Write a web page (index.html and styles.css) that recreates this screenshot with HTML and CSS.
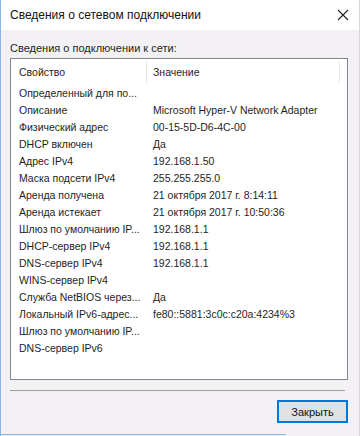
FILE: index.html
```html
<!DOCTYPE html>
<html lang="ru">
<head>
  <meta charset="UTF-8" />
  <title>Сведения о сетевом подключении</title>
  <link rel="stylesheet" href="styles.css">
</head>
<body>
  <div class="window">
    <div class="titlebar">
      <span class="title">Сведения о сетевом подключении</span>
      <svg class="close" width="12" height="12" viewBox="0 0 12 12">
        <path d="M1 1 L11 11 M11 1 L1 11" stroke="#222" stroke-width="1.1" fill="none" />
      </svg>
    </div>

    <div class="content">
      <div class="caption">Сведения о подключении к сети:</div>

      <div class="listbox">
        <div class="list-head">
          <div class="col-name">Свойство</div>
          <div class="col-value">Значение</div>
          <div class="col-rest"></div>
        </div>
        <div class="rows">
          <div class="row"><span>Определенный для по...</span><span></span></div>
          <div class="row"><span>Описание</span><span>Microsoft Hyper-V Network Adapter</span></div>
          <div class="row"><span>Физический адрес</span><span>00-15-5D-D6-4C-00</span></div>
          <div class="row"><span>DHCP включен</span><span>Да</span></div>
          <div class="row"><span>Адрес IPv4</span><span>192.168.1.50</span></div>
          <div class="row"><span>Маска подсети IPv4</span><span>255.255.255.0</span></div>
          <div class="row"><span>Аренда получена</span><span>21 октября 2017 г. 8:14:11</span></div>
          <div class="row"><span>Аренда истекает</span><span>21 октября 2017 г. 10:50:36</span></div>
          <div class="row"><span>Шлюз по умолчанию IP...</span><span>192.168.1.1</span></div>
          <div class="row"><span>DHCP-сервер IPv4</span><span>192.168.1.1</span></div>
          <div class="row"><span>DNS-сервер IPv4</span><span>192.168.1.1</span></div>
          <div class="row"><span>WINS-сервер IPv4</span><span></span></div>
          <div class="row"><span>Служба NetBIOS через...</span><span>Да</span></div>
          <div class="row"><span>Локальный IPv6-адрес...</span><span>fe80::5881:3c0c:c20a:4234%3</span></div>
          <div class="row"><span>Шлюз по умолчанию IP...</span><span></span></div>
          <div class="row"><span>DNS-сервер IPv6</span><span></span></div>
        </div>
      </div>

      <div class="divider"></div>

      <div class="buttons">
        <button class="btn-close">Закрыть</button>
      </div>
    </div>
    <div class="bottom-line"></div>
  </div>
</body>
</html>
```

FILE: styles.css
```css
body {
  margin: 0;
  font-family: 'Liberation Sans', Arial, sans-serif;
  color: #1e1e1e;
  background-color: #f4f1f4;
}
.window {
  width: 360px;
  height: 436px;
  box-sizing: border-box;
  border-left: 1px solid #8ab8e6;
  border-right: 1px solid #d8d5d8;
  display: flex;
  flex-direction: column;
  background-color: #f4f1f4;
}
.titlebar {
  height: 30px;
  flex-shrink: 0;
  background-color: #fff;
  display: flex;
  align-items: center;
  justify-content: space-between;
  padding: 0 8px 0 9px;
}
.title {
  font-size: 12px;
  color: #111;
}
.close {
  margin-right: 2px;
}
.content {
  flex: 1;
  display: flex;
  flex-direction: column;
  padding: 12px 11px 0 9px;
}
.caption {
  font-size: 11px;
  line-height: 13px;
}
.listbox {
  margin-top: 3px;
  height: 322px;
  box-sizing: border-box;
  border: 1px solid #828790;
  background-color: #fff;
  font-size: 10.5px;
}
.list-head {
  display: flex;
  height: 25px;
  align-items: center;
  padding-top: 1px;
  box-sizing: border-box;
}
.col-name {
  width: 127px;
  padding-left: 8px;
  border-right: 1px solid #e5e5e5;
  line-height: 22px;
}
.col-value {
  width: 186px;
  padding-left: 6px;
  border-right: 1px solid #e5e5e5;
  line-height: 22px;
}
.rows {
  display: flex;
  flex-direction: column;
}
.row {
  display: flex;
  height: 17px;
  align-items: center;
}
.row span:first-child {
  width: 128px;
  padding-left: 8px;
  white-space: nowrap;
}
.row span:last-child {
  padding-left: 6px;
  white-space: nowrap;
}
.divider {
  margin-top: 10px;
  margin-right: 3px;
  height: 1px;
  background-color: #a0a0a0;
}
.buttons {
  display: flex;
  justify-content: flex-end;
  margin-top: 9px;
}
.btn-close {
  width: 71px;
  height: 23px;
  border: 2px solid #0078d7;
  background-color: #e1e1e1;
  font-family: 'Liberation Sans', Arial, sans-serif;
  font-size: 11px;
  color: #111;
  padding: 0;
}
.bottom-line {
  height: 1px;
  width: 285px;
  margin-bottom: 1px;
  background-color: #8ab8e6;
}
```
